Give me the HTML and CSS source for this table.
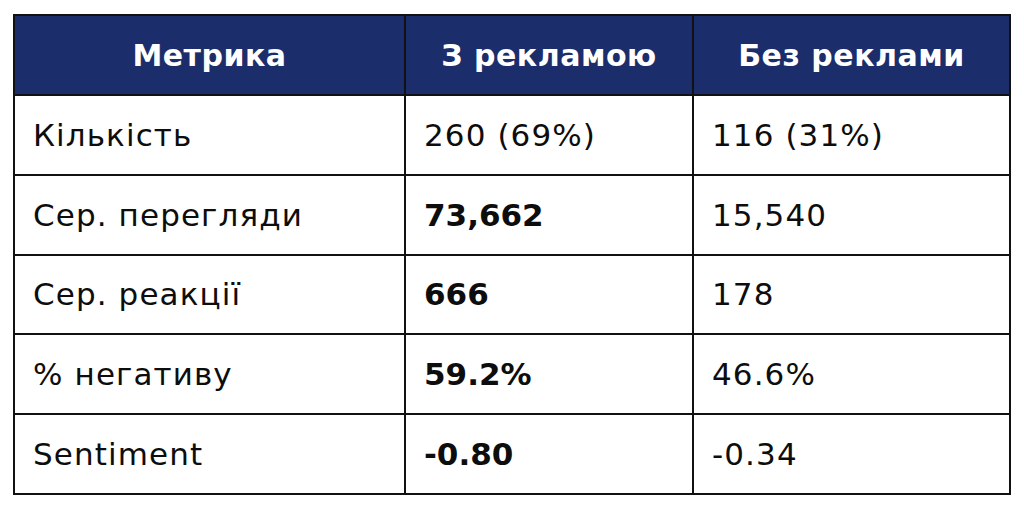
FILE: index.html
```html
<!DOCTYPE html>
<html lang="uk">
<head>
<meta charset="utf-8">
<link rel="stylesheet" href="styles.css">
</head>
<body>
<div class="wrap">
<table class="tbl">
<colgroup><col class="c1"><col class="c2"><col class="c3"></colgroup>
<thead>
<tr><th>Метрика</th><th>З рекламою</th><th>Без реклами</th></tr>
</thead>
<tbody>
<tr><td>Кількість</td><td>260 (69%)</td><td>116 (31%)</td></tr>
<tr><td>Сер. перегляди</td><td class="b">73,662</td><td>15,540</td></tr>
<tr><td>Сер. реакції</td><td class="b">666</td><td>178</td></tr>
<tr><td>% негативу</td><td class="b">59.2%</td><td>46.6%</td></tr>
<tr><td>Sentiment</td><td class="b">-0.80</td><td>-0.34</td></tr>
</tbody>
</table>
</div>
</body>
</html>
```
FILE: styles.css
```css
html, body { margin: 0; background: #fff; }
.wrap { padding: 14px 0 0 13px; }
.tbl {
  border-collapse: collapse;
  width: 996px;
  table-layout: fixed;
  font-family: "DejaVu Sans", "Liberation Sans", sans-serif;
  color: #0d0d0d;
}
.c1 { width: 391px; }
.c2 { width: 288px; }
.c3 { width: 317px; }
.tbl th, .tbl td { border: 2px solid #111; }
.tbl th {
  background: #1b2d6b;
  color: #fff;
  font-family: "DejaVu Sans", sans-serif;
  font-weight: 700;
  font-size: 30px;
  letter-spacing: 0.5px;
  height: 78px;
  text-align: center;
  padding: 0;
}
.tbl td {
  font-size: 31px;
  letter-spacing: 1.1px;
  height: 77.8px;
  padding: 0 0 0 18px;
  text-align: left;
}
.tbl td.b { font-weight: 700; letter-spacing: 0; }
```
